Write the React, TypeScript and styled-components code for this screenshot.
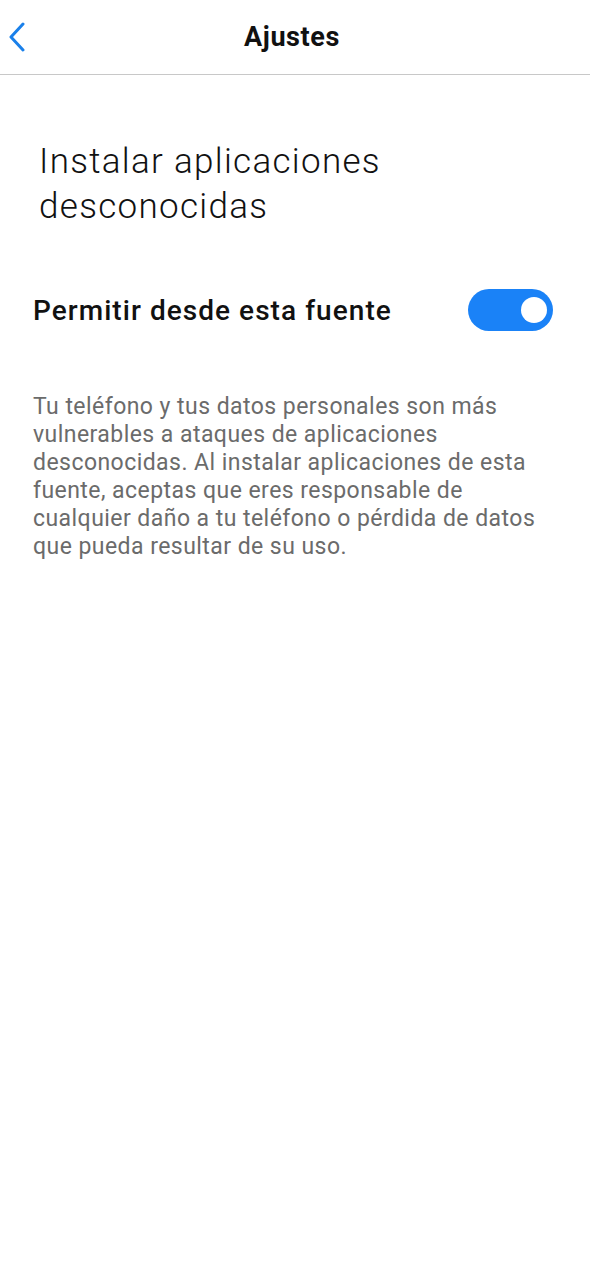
import React, { useState } from 'react';
import styled, { createGlobalStyle } from 'styled-components';

const GlobalStyle = createGlobalStyle`
  html, body {
    margin: 0;
    padding: 0;
    background: #ffffff;
  }
  body {
    font-family: Roboto, "Noto Sans", sans-serif;
    -webkit-font-smoothing: antialiased;
  }
`;

const App: React.FC = () => {
  const [allowed, setAllowed] = useState(true);

  return (
    <>
      <GlobalStyle />
      <Page>
        <Header>
          <BackButton aria-label="Atrás">
            <svg width="18" height="30" viewBox="0 0 18 30" fill="none">
              <path d="M14 2 L2 15 L14 28" stroke="#1a80ea" strokeWidth="3" strokeLinecap="round" strokeLinejoin="round" />
            </svg>
          </BackButton>
          <HeaderTitle>Ajustes</HeaderTitle>
        </Header>
        <Content>
          <PageTitle>Instalar aplicaciones desconocidas</PageTitle>
          <SettingRow>
            <SettingLabel>Permitir desde esta fuente</SettingLabel>
            <Toggle on={allowed} onClick={() => setAllowed(!allowed)} aria-pressed={allowed}>
              <Knob on={allowed} />
            </Toggle>
          </SettingRow>
          <Description>
            Tu teléfono y tus datos personales son más vulnerables a ataques de aplicaciones
            desconocidas. Al instalar aplicaciones de esta fuente, aceptas que eres responsable de
            cualquier daño a tu teléfono o pérdida de datos que pueda resultar de su uso.
          </Description>
        </Content>
      </Page>
    </>
  );
};

const Page = styled.div`
  width: 590px;
  min-height: 1280px;
  background: #ffffff;
`;

const Header = styled.div`
  position: relative;
  height: 75px;
  display: flex;
  align-items: center;
  justify-content: center;
  border-bottom: 1px solid #c8c8c8;
  box-sizing: border-box;
`;

const BackButton = styled.button`
  position: absolute;
  left: 9px;
  top: 22px;
  padding: 0;
  border: none;
  background: none;
  display: flex;
  cursor: pointer;
`;

const HeaderTitle = styled.h1`
  margin: 0;
  font-size: 27px;
  font-weight: 700;
  color: #111;
  letter-spacing: 0.6px;
  transform: translateX(-3px);
`;

const Content = styled.div`
  padding: 64px 37px 0 33px;
`;

const PageTitle = styled.h2`
  margin: 0 0 0 6px;
  font-size: 35px;
  font-weight: 300;
  line-height: 45px;
  letter-spacing: 1.3px;
  color: #111;
  max-width: 400px;
`;

const SettingRow = styled.div`
  display: flex;
  align-items: center;
  justify-content: space-between;
  margin-top: 60px;
`;

const SettingLabel = styled.span`
  font-size: 28px;
  font-weight: 500;
  letter-spacing: 1.05px;
  color: #111;
`;

const Toggle = styled.button<{ on: boolean }>`
  width: 85px;
  height: 42px;
  border-radius: 21px;
  border: none;
  padding: 0 6px;
  display: flex;
  align-items: center;
  justify-content: ${(p) => (p.on ? 'flex-end' : 'flex-start')};
  background: ${(p) => (p.on ? '#1a82f7' : '#d6d6d6')};
  cursor: pointer;
`;

const Knob = styled.span<{ on: boolean }>`
  width: 26px;
  height: 26px;
  border-radius: 50%;
  background: #ffffff;
`;

const Description = styled.p`
  margin: 62px 0 0;
  font-size: 23px;
  line-height: 28px;
  letter-spacing: 0.45px;
  color: #6b6b6b;
`;

export default App;
